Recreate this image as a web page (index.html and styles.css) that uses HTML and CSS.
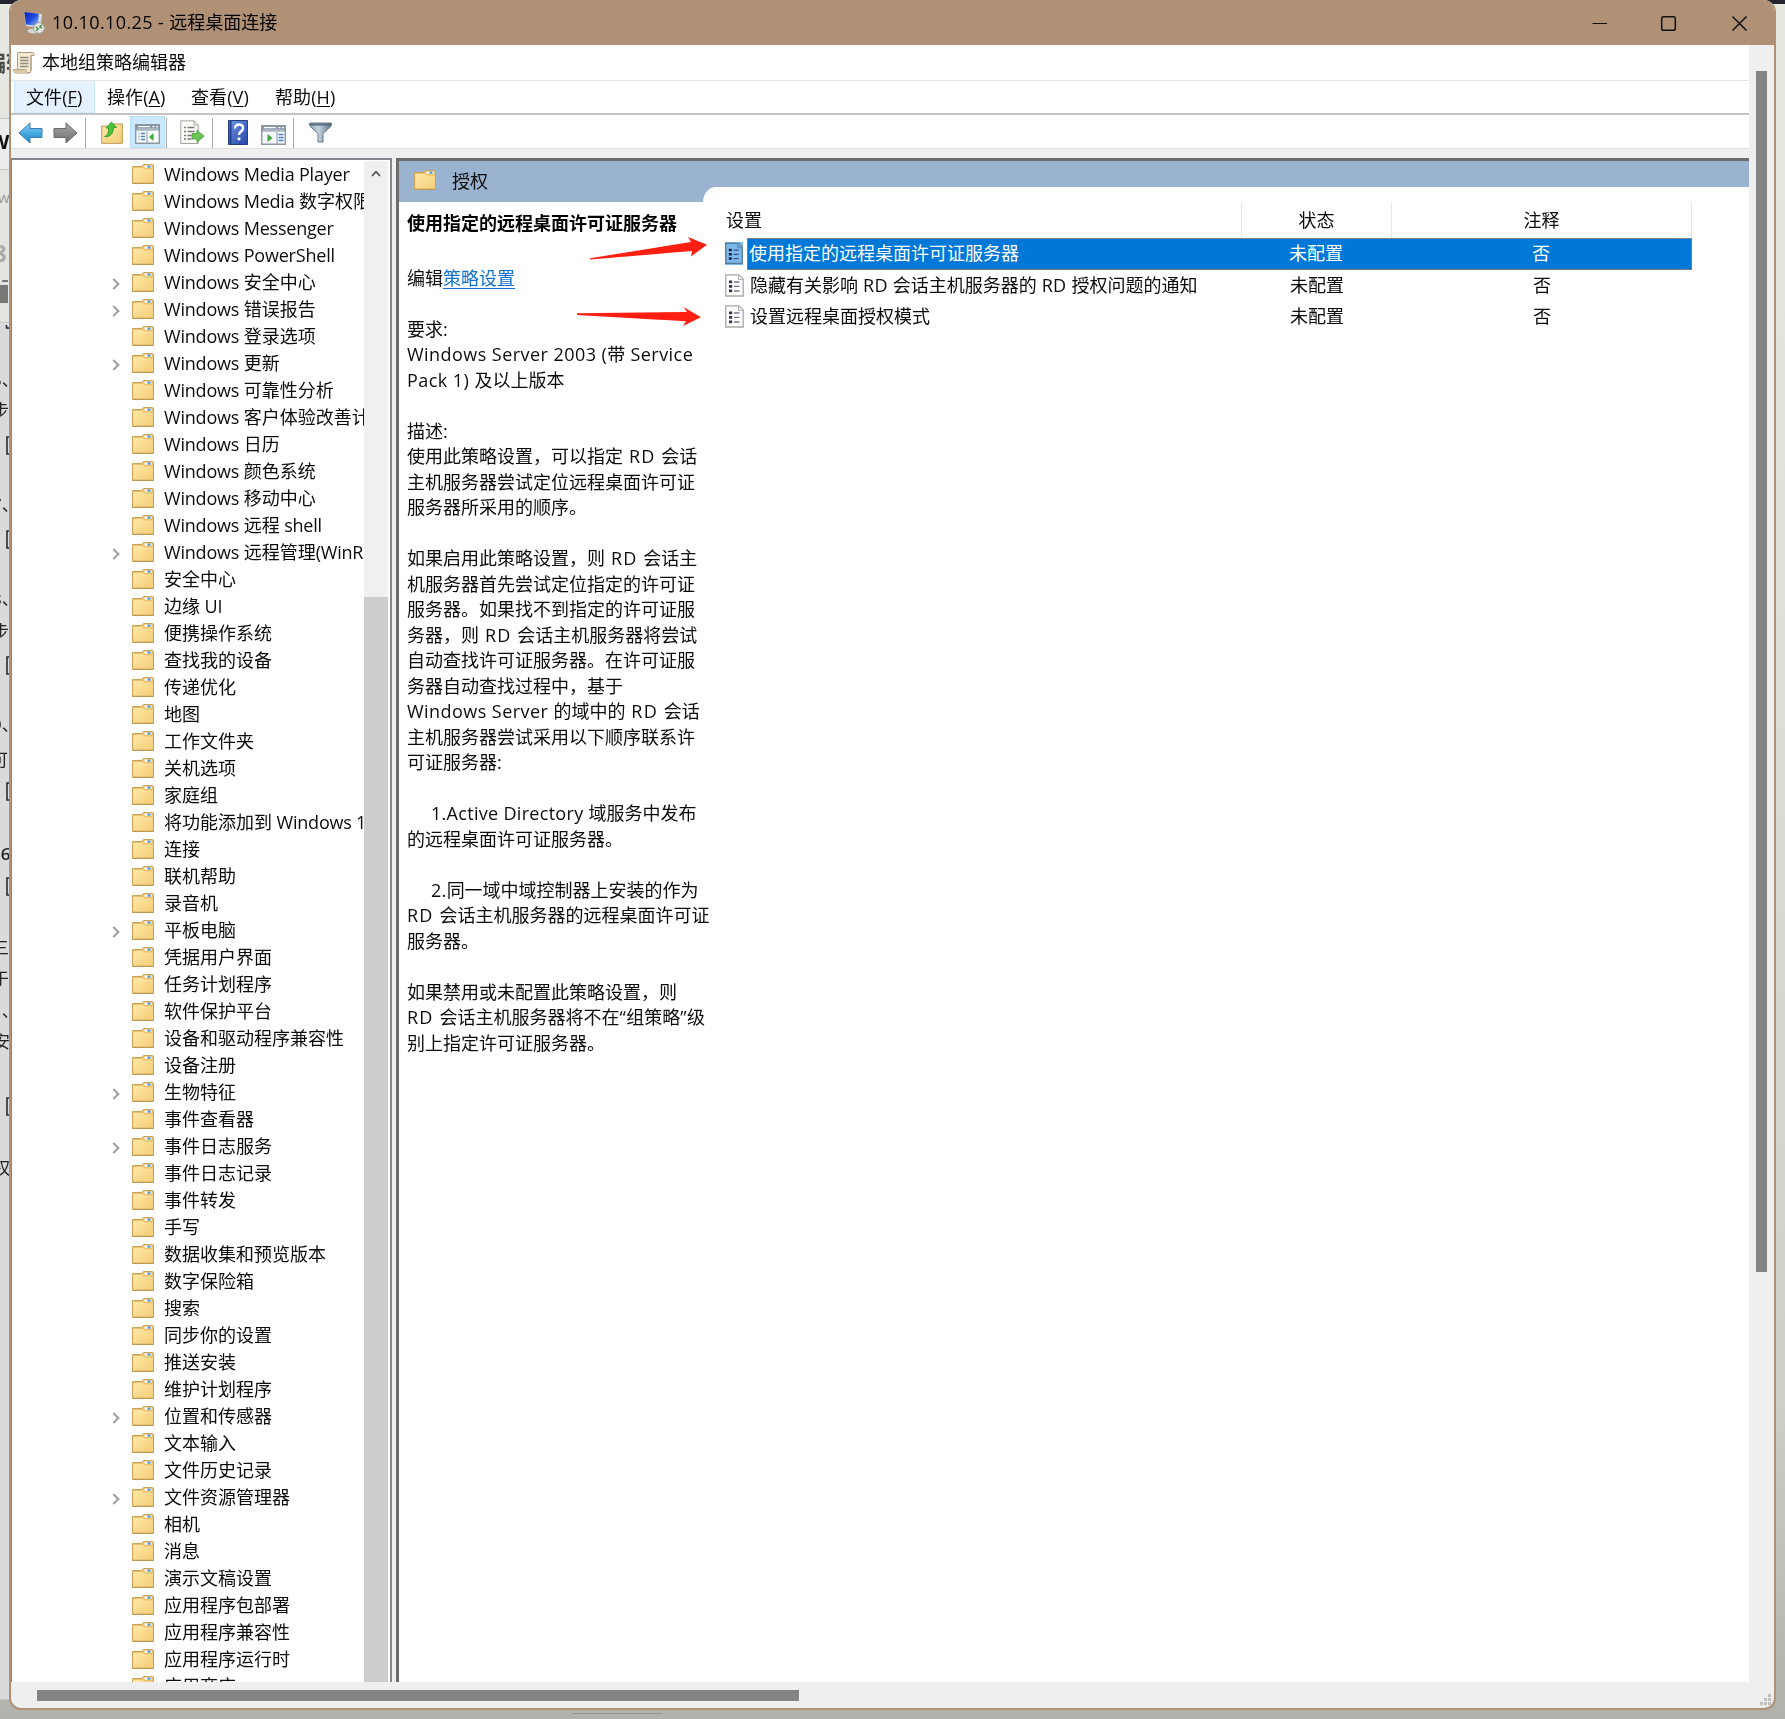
FILE: index.html
```html
<!DOCTYPE html>
<html lang="zh-CN">
<head>
<meta charset="utf-8">
<title>10.10.10.25 - 远程桌面连接</title>
<link rel="stylesheet" href="styles.css">
</head>
<body>
<svg width="0" height="0" class="defs">
  <defs>
    <linearGradient id="gf" x1="0" y1="0" x2="1" y2="1"><stop offset="0" stop-color="#ffe9a6"/><stop offset="1" stop-color="#f3cd78"/></linearGradient>
    <linearGradient id="gb" x1="0" y1="0" x2="0" y2="1"><stop offset="0" stop-color="#7fd0f7"/><stop offset="1" stop-color="#1684cf"/></linearGradient>
    <linearGradient id="gg" x1="0" y1="0" x2="0" y2="1"><stop offset="0" stop-color="#aaa"/><stop offset="1" stop-color="#6e6e6e"/></linearGradient>
    <linearGradient id="gh" x1="0" y1="0" x2="1" y2="1"><stop offset="0" stop-color="#6f93e0"/><stop offset="1" stop-color="#2545a8"/></linearGradient>
    <linearGradient id="gm" x1="0" y1="0" x2="1" y2="1"><stop offset="0" stop-color="#0a1fb0"/><stop offset=".5" stop-color="#1d49e0"/><stop offset="1" stop-color="#9fc3f7"/></linearGradient>
    <linearGradient id="gt" x1="0" y1="0" x2="1" y2="0"><stop offset="0" stop-color="#8da3b5"/><stop offset=".4" stop-color="#c5d5e2"/><stop offset="1" stop-color="#5d7385"/></linearGradient>
    <symbol id="folder" viewBox="0 0 22 20">
      <path d="M.5 2.500h9l2-2h8.500q1.500 0 1.500 1.500v17.500h-21z" fill="#e9c272" stroke="#c9a257"/>
      <rect x="12.500" y="1.500" width="7" height="2.200" fill="#fff"/><rect x="15.500" y="1.500" width="3" height="2.200" fill="#4c95d8"/>
      <path d="M1.200 4h9.300l2 1.500h8.300v13.300H1.200z" fill="url(#gf)"/>
      <path d="M1 19.300h20.500" stroke="#b99752"/>
    </symbol>
    <symbol id="doc" viewBox="0 0 19 23">
      <path class="paper" d="M.8.800H14l4.200 4.200v17H.8z" stroke-width="1.300"/>
      <path class="fold" d="M13.500.800v4.700h4.700"/>
      <path d="M4 6.500h3.200v2.700H4zM4 11h3.200v2.700H4zM4 15.500h3.200v2.700H4z" fill="#33384a"/>
      <path d="M9 8h5.500M9 12.400h5.500M9 17h5.500" stroke="#7b7590" stroke-width="1.300"/>
    </symbol>
    <symbol id="pane" viewBox="0 0 25 20">
      <path d="M.7.700h23.600v18.600H.7z" fill="#f6f8fa" stroke="#8b97a3" stroke-width="1.400"/>
      <path d="M1 1h23v5.500H1z" fill="#8795a4"/><path d="M3 2.700h12M17.500 2.700h2M21 2.700h2" stroke="#fff" stroke-width="1.200"/><path d="M2 5h21" stroke="#c9d2da"/>
    </symbol>
  </defs>
</svg>

<svg class="behind" width="1785" height="1719">
  <rect class="b-top" width="1785" height="4"/>
  <rect class="b-line" y="118" width="9" height="1"/><rect class="b-lite" y="119" width="9" height="50"/><rect class="b-line" y="169" width="9" height="1"/>
  <rect class="b-grey" y="324" width="9" height="1375"/><rect class="b-line" y="322" width="9" height="1"/><rect class="b-line" y="1699" width="9" height="1"/>
  <text class="b-h" x="-17" y="71">编辑</text>
  <text class="b-w" x="-10" y="149">W</text>
  <text class="b-s" x="-2" y="203">w</text>
  <text class="b-n" x="-7" y="262">8</text>
  <rect x="2" y="280" width="6" height="2" fill="#777"/><rect y="285" width="8" height="18" fill="#777"/>
  <path d="M6.500 325v3h3" class="b-box"/>
  <text class="b-t" x="-8" y="386">5、</text><text class="b-t" x="-8" y="417">步</text>
  <path class="b-box" d="M10 437H7v17h3M10 531H7v17h3M10 657H7v17h3M10 783H7v17h3M10 878H7v17h3M10 1098H7v17h3"/>
  <text class="b-t" x="-8" y="511">7、</text><text class="b-t" x="-8" y="605">8、</text><text class="b-t" x="-8" y="638">步</text>
  <text class="b-t" x="-8" y="731">9、</text><text class="b-t" x="-9" y="766">可</text><text class="b-t b-m" x="-9" y="860">16</text>
  <text class="b-t" x="-8" y="954">三</text><text class="b-t" x="-8" y="985">于</text><text class="b-t" x="-8" y="1017">1、</text><text class="b-t" x="-7" y="1048">安</text><text class="b-t" x="-7" y="1174">权</text>
  <rect x="572" y="1713" width="90" height="1" fill="#949492"/>
</svg>

<div class="window">
  <header class="titlebar">
    <svg class="rdp" width="22" height="24" viewBox="0 0 22 24"><ellipse cx="11" cy="20" rx="6.500" ry="2.500" fill="#d4d6da"/><path d="M1 1l18 2-1.500 14L3 15z" fill="#d9dde6"/><path d="M1.300 1l14.500 1.700-.8 12.300L3 13.500z" fill="url(#gm)"/><circle cx="16" cy="17" r="5.400" fill="#e4e6e2" stroke="#9aa09a"/><path d="M12.800 16l2.500 1.800-2 2M19.200 13.700l-2.500 2 2.300 1.600" fill="none" stroke="#3d8b3d" stroke-width="1.300"/></svg>
    <span class="caption"><span class="en">10.10.10.25 - </span>远程桌面连接</span>
    <svg class="winbtns" width="160" height="20" viewBox="0 0 160 20"><path d="M.5 10.500H15" stroke="#111" stroke-width="1.100"/><rect x="69.700" y="3.700" width="13.600" height="13.600" rx="1.800"/><path d="M140.500 3.500l14 14M154.500 3.500l-14 14"/></svg>
  </header>
  <div class="client">
    <div class="remote">
      <div class="apptitle">
        <svg width="22" height="23" viewBox="0 0 22 23"><path d="M5 1.500h14q2.500 0 2 3h-3v15q0 2.500-3 2.500H3q-2.500 0-2.500-3.500h4V4z" fill="#f3ead0" stroke="#a99c80"/><path d="M18 4.500v15q-.5 2.500-3 2.500-2 0-2-3.500H.7" fill="none" stroke="#a99c80"/><path d="M1 18.700h12q.2 2.300 1 3H3q-2 0-2-3z" fill="#dccba2"/><path d="M7 6.500h8.500M7 9.500h8.500M7 12.500h8.500M7 15.500h8.500" stroke="#938c80" stroke-width="1.300"/></svg>
        <span>本地组策略编辑器</span>
      </div>
      <nav class="menu">
        <a class="on">文件(<u>F</u>)</a><a>操作(<u>A</u>)</a><a>查看(<u>V</u>)</a><a>帮助(<u>H</u>)</a>
      </nav>
      <div class="toolbar">
        <svg class="t-back" width="25" height="22" viewBox="0 0 25 22"><path d="M1 11L12 1v5.500h12v9H12V21z" fill="url(#gb)" stroke="#3a7fae"/></svg>
        <svg class="t-fwd" width="25" height="22" viewBox="0 0 25 22"><path d="M24 11L13 1v5.500H1v9h12V21z" fill="url(#gg)" stroke="#6b6b6b"/></svg>
        <i class="sep"></i>
        <svg class="t-up" width="22" height="23" viewBox="0 0 22 23"><path d="M.7 5H9l2-2h10.300v19.300H.7z" fill="url(#gf)" stroke="#b99752"/><path d="M3.500 15.500c3.500-1 4-4 4-8.500H5L10.500 1l5 5.500h-3c0 6-3.500 10-9 9z" fill="#49c23a" stroke="#2f8f28" stroke-width=".8"/></svg>
        <span class="t-on"><svg width="25" height="20"><use href="#pane"/><path d="M2 8h9v10H2z" fill="#fff"/><path d="M3.500 9.500h1M3.500 12.500h1M3.500 15.500h1M6 9.500h4M6 12.500h4M6 15.500h4" stroke="#4a7fc0" stroke-width="1.300"/><path d="M12 7v12" stroke="#8b97a3"/><path d="M18.500 9v8l-4.500-4z" fill="#3aa935"/></svg></span>
        <i class="sep s2"></i>
        <svg class="t-exp" width="25" height="25" viewBox="0 0 25 25"><path d="M.8.800H14l4.200 4.200v18.500H.8z" fill="#fbfbf8" stroke="#a5a5a0"/><path d="M14 .8V5h4.200" fill="none" stroke="#a5a5a0"/><path d="M4 7.500h2M4 11.500h2M4 15.500h2M4 19h2M7.500 7.500h7M7.500 11.500h7M7.500 15.500h4M7.500 19h4" stroke="#777" stroke-width="1.400"/><path d="M12 13.500h5V10l7 6.200-7 6.200V19h-5z" fill="#6cc455" stroke="#45a035" stroke-width=".8"/></svg>
        <i class="sep s3"></i>
        <svg class="t-help" width="20" height="25" viewBox="0 0 20 25"><path d="M.5.500h19v24H.5z" fill="url(#gh)" stroke="#24407f"/><path d="M2.500 1v23" stroke="#23408f" stroke-width="2"/><path d="M7 8.500q0-4 4-4t4 3.600q0 2.300-2.200 3.500-1.800 1-1.800 3.400" fill="none" stroke="#fff" stroke-width="2.400"/><circle cx="11" cy="18.800" r="1.600" fill="#fff"/></svg>
        <svg class="t-act" width="25" height="20"><use href="#pane"/><path d="M16 7v12" stroke="#8b97a3"/><path d="M17.500 9.500h5M17.500 12.500h5M17.500 15.500h5" stroke="#4a7fc0" stroke-width="1.300"/><path d="M6.500 9v8l5-4z" fill="#3aa935"/></svg>
        <i class="sep s4"></i>
        <svg class="t-filter" width="23" height="21" viewBox="0 0 23 21"><path d="M.7 1h21.600v3L14 11.500V20H9v-8.500L.7 4z" fill="url(#gt)" stroke="#647a8c"/><path d="M1 2.500h21" stroke="#566d80" stroke-width="2"/></svg>
      </div>
      <main class="panes">
        <section class="tree">
          <ul>
            <li><svg><use href="#folder"/></svg><span class="en">Windows Media Player</span></li>
            <li><svg><use href="#folder"/></svg><span class="en">Windows Media </span>数字权限管理</li>
            <li><svg><use href="#folder"/></svg><span class="en">Windows Messenger</span></li>
            <li><svg><use href="#folder"/></svg><span class="en">Windows PowerShell</span></li>
            <li class="more"><svg><use href="#folder"/></svg><span class="en">Windows </span>安全中心</li>
            <li class="more"><svg><use href="#folder"/></svg><span class="en">Windows </span>错误报告</li>
            <li><svg><use href="#folder"/></svg><span class="en">Windows </span>登录选项</li>
            <li class="more"><svg><use href="#folder"/></svg><span class="en">Windows </span>更新</li>
            <li><svg><use href="#folder"/></svg><span class="en">Windows </span>可靠性分析</li>
            <li><svg><use href="#folder"/></svg><span class="en">Windows </span>客户体验改善计划</li>
            <li><svg><use href="#folder"/></svg><span class="en">Windows </span>日历</li>
            <li><svg><use href="#folder"/></svg><span class="en">Windows </span>颜色系统</li>
            <li><svg><use href="#folder"/></svg><span class="en">Windows </span>移动中心</li>
            <li><svg><use href="#folder"/></svg><span class="en">Windows </span>远程<span class="en"> shell</span></li>
            <li class="more"><svg><use href="#folder"/></svg><span class="en">Windows </span>远程管理<span class="en">(WinRM)</span></li>
            <li><svg><use href="#folder"/></svg>安全中心</li>
            <li><svg><use href="#folder"/></svg>边缘<span class="en"> UI</span></li>
            <li><svg><use href="#folder"/></svg>便携操作系统</li>
            <li><svg><use href="#folder"/></svg>查找我的设备</li>
            <li><svg><use href="#folder"/></svg>传递优化</li>
            <li><svg><use href="#folder"/></svg>地图</li>
            <li><svg><use href="#folder"/></svg>工作文件夹</li>
            <li><svg><use href="#folder"/></svg>关机选项</li>
            <li><svg><use href="#folder"/></svg>家庭组</li>
            <li><svg><use href="#folder"/></svg>将功能添加到<span class="en"> Windows 10</span></li>
            <li><svg><use href="#folder"/></svg>连接</li>
            <li><svg><use href="#folder"/></svg>联机帮助</li>
            <li><svg><use href="#folder"/></svg>录音机</li>
            <li class="more"><svg><use href="#folder"/></svg>平板电脑</li>
            <li><svg><use href="#folder"/></svg>凭据用户界面</li>
            <li><svg><use href="#folder"/></svg>任务计划程序</li>
            <li><svg><use href="#folder"/></svg>软件保护平台</li>
            <li><svg><use href="#folder"/></svg>设备和驱动程序兼容性</li>
            <li><svg><use href="#folder"/></svg>设备注册</li>
            <li class="more"><svg><use href="#folder"/></svg>生物特征</li>
            <li><svg><use href="#folder"/></svg>事件查看器</li>
            <li class="more"><svg><use href="#folder"/></svg>事件日志服务</li>
            <li><svg><use href="#folder"/></svg>事件日志记录</li>
            <li><svg><use href="#folder"/></svg>事件转发</li>
            <li><svg><use href="#folder"/></svg>手写</li>
            <li><svg><use href="#folder"/></svg>数据收集和预览版本</li>
            <li><svg><use href="#folder"/></svg>数字保险箱</li>
            <li><svg><use href="#folder"/></svg>搜索</li>
            <li><svg><use href="#folder"/></svg>同步你的设置</li>
            <li><svg><use href="#folder"/></svg>推送安装</li>
            <li><svg><use href="#folder"/></svg>维护计划程序</li>
            <li class="more"><svg><use href="#folder"/></svg>位置和传感器</li>
            <li><svg><use href="#folder"/></svg>文本输入</li>
            <li><svg><use href="#folder"/></svg>文件历史记录</li>
            <li class="more"><svg><use href="#folder"/></svg>文件资源管理器</li>
            <li><svg><use href="#folder"/></svg>相机</li>
            <li><svg><use href="#folder"/></svg>消息</li>
            <li><svg><use href="#folder"/></svg>演示文稿设置</li>
            <li><svg><use href="#folder"/></svg>应用程序包部署</li>
            <li><svg><use href="#folder"/></svg>应用程序兼容性</li>
            <li><svg><use href="#folder"/></svg>应用程序运行时</li>
            <li><svg><use href="#folder"/></svg>应用商店</li>
          </ul>
          <div class="treebar"><svg width="10" height="7" viewBox="0 0 10 7"><path d="M1 6l4-4.300L9 6" fill="none" stroke="#555" stroke-width="1.800"/></svg><i></i></div>
        </section>
        <section class="detail">
          <div class="info">
            <div class="band"><svg width="22" height="20"><use href="#folder"/></svg><span>授权</span></div>
            <h1>使用指定的远程桌面许可证服务器</h1>
            <div class="desc">编辑<a>策略设置</a>

要求:
<span class="en">Windows Server 2003 (</span>带<span class="en"> Service</span>
<span class="en">Pack 1) </span>及以上版本

描述:
使用此策略设置，可以指定<span class="rd"> RD </span>会话
主机服务器尝试定位远程桌面许可证
服务器所采用的顺序。

如果启用此策略设置，则<span class="rd"> RD </span>会话主
机服务器首先尝试定位指定的许可证
服务器。如果找不到指定的许可证服
务器，则<span class="rd"> RD </span>会话主机服务器将尝试
自动查找许可证服务器。在许可证服
务器自动查找过程中，基于
<span class="en">Windows Server </span>的域中的<span class="rd"> RD </span>会话
主机服务器尝试采用以下顺序联系许
可证服务器:

<span class="en ind">1.Active Directory </span>域服务中发布
的远程桌面许可证服务器。

<span class="en ind">2.</span>同一域中域控制器上安装的作为
<span class="rd">RD </span>会话主机服务器的远程桌面许可证
服务器。

如果禁用或未配置此策略设置，则
<span class="rd">RD </span>会话主机服务器将不在<span class="en">“</span>组策略<span class="en">”</span>级
别上指定许可证服务器。</div>
          </div>
          <div class="listwrap">
            <div class="list">
              <div class="row head"><span>设置</span><span>状态</span><span>注释</span></div>
              <div class="row sel"><svg><use href="#doc"/></svg><div class="cells"><span>使用指定的远程桌面许可证服务器</span><span>未配置</span><span>否</span></div></div>
              <div class="row"><svg><use href="#doc"/></svg><div class="cells"><span>隐藏有关影响<span class="en"> RD </span>会话主机服务器的<span class="en"> RD </span>授权问题的通知</span><span>未配置</span><span>否</span></div></div>
              <div class="row"><svg><use href="#doc"/></svg><div class="cells"><span>设置远程桌面授权模式</span><span>未配置</span><span>否</span></div></div>
            </div>
          </div>
        </section>
      </main>
    </div>
    <div class="vbar"><i></i></div>
    <div class="hbar"><i></i></div>
  </div>
  <svg class="grip" width="12" height="12"><path d="M8 0h3v3H8zM4 4h3v3H4zM8 4h3v3H8zM0 8h3v3H0zM4 8h3v3H4zM8 8h3v3H8z" fill="#bfbfbf"/></svg>
</div>

<svg class="arrows" width="140" height="95" viewBox="575 235 140 95">
  <path d="M590 259.500v-1.200L691 242l-3-5 19 7.700-16 11.800 1-5.500z" fill="#ff1f12"/>
  <path d="M577 313.200L687 312l-3.500-5 17.500 10.300-18 8.700 3-4.700L577 315z" fill="#ff1f12"/>
</svg>
</body>
</html>
```
FILE: styles.css
```css
* { box-sizing: border-box; }
html, body { margin: 0; height: 100%; overflow: hidden; }
body {
  width: 1785px; height: 1719px; padding: 0 9px 9px;
  background: linear-gradient(#e8e8e2 0, #e0e0da 600px, #cfcfca 1400px, #b2b2ad 1719px);
  font: 18px/27px "Open Sans", "Noto Sans CJK SC", sans-serif;
  color: #0c0c0c;
}
.defs { position: absolute; }
.en, .rd { white-space: pre; letter-spacing: -.2px; }

/* page partly visible behind the window */
.behind { position: absolute; left: 0; top: 0; font-family: "Open Sans", "Noto Sans CJK SC", sans-serif; }
.b-top { fill: #23252e; }
.b-line { fill: #c4c4c0; }
.b-lite { fill: #ececec; }
.b-grey { fill: #dadada; }
.b-h { font-size: 23px; font-weight: 700; fill: #4a4a48; }
.b-w { font-size: 20px; font-weight: 700; fill: #111; }
.b-s { font-size: 15px; fill: #999; }
.b-n { font-size: 24px; font-weight: 700; fill: #aaa; }
.b-t { font-size: 17px; fill: #222; }
.b-m { font-weight: 600; }
.b-box { fill: none; stroke: #222; stroke-width: 1.500; }

.window {
  position: relative; width: 1767px; height: 1710px;
  display: flex; flex-direction: column; overflow: hidden;
  border: 2px solid #b09175; border-top: 0; border-radius: 12px; background: #efefef;
}
.titlebar { flex: none; height: 45px; display: flex; align-items: center; background: #b09175; color: #000; }
.rdp { margin-left: 12px; }
.caption { margin-left: 7px; flex: 1; }
.caption .en { letter-spacing: .4px; }
.winbtns { margin-right: 22px; fill: none; stroke: #111; stroke-width: 1.500; }
.grip { position: absolute; right: 2px; bottom: 2px; }

.client { flex: 1; display: grid; grid-template: 1637px 26px / 1738px 25px; }
.remote { display: flex; flex-direction: column; min-width: 0; background: #fff; overflow: hidden; }
.vbar { padding: 26px 0 0 7px; }
.vbar i { display: block; width: 11px; height: 1201px; background: #848484; }
.hbar { grid-column: 1 / 3; padding: 8px 0 0 26px; }
.hbar i { display: block; width: 762px; height: 11px; background: #848484; }

.apptitle { flex: none; height: 35px; display: flex; align-items: center; gap: 7px; padding-left: 2px; }
.menu { flex: none; height: 35px; display: flex; border-top: 1px solid #e5e5e5; border-bottom: 2px solid #c4c4c4; padding-left: 3px; }
.menu a { width: 84px; padding-left: 12px; line-height: 33px; white-space: nowrap; letter-spacing: .1px; }
.menu a.on { width: 81px; height: 32px; padding-left: 11px; background: #e5f1ff; border: 1px solid #cce8ff; border-top: 0; }
.menu a u { text-underline-offset: 2px; text-decoration-thickness: 1px; }
.toolbar { flex: none; height: 34px; display: flex; align-items: center; border-bottom: 1px solid #e0e0e0; padding: 2px 0 0 7px; }
.toolbar svg { flex: none; }
.sep { width: 1px; height: 30px; margin-left: 7px; background: #a9a9a9; }
.t-fwd { margin-left: 10px; }
.t-up { margin-left: 15px; }
.t-on { margin-left: 7px; width: 35px; height: 32px; margin-top: -2px; background: #cce8ff; border: 1px solid #b4dcfb; display: flex; align-items: center; justify-content: center; padding-top: 5px; }
.s2 { margin-left: 1px; }
.t-exp { margin-left: 13px; }
.s3 { margin-left: 7px; }
.t-help { margin-left: 15px; }
.t-act { margin: 4px 0 0 13px; }
.s4 { margin-left: 7px; }
.t-filter { margin-left: 15px; }

.panes { flex: 1; min-height: 0; display: flex; gap: 4px; padding-top: 9px; background: #efefef; }
.tree { width: 381px; display: flex; background: #fff; border: 2px solid #83868c; border-width: 2px 2px 0 1px; padding-top: 1px; overflow: hidden; }
.tree ul { list-style: none; margin: 0; padding: 0 0 0 101px; width: 352px; overflow: hidden; }
.tree li { display: flex; align-items: center; height: 27px; white-space: pre; padding: .6px 0 0 19px; }
.tree li > * { flex: none; }
.tree li svg { width: 22px; height: 20px; margin: 0 10px 1px 0; }
.tree li.more { padding-left: 0; }
.tree li.more::before { content: ""; flex: none; width: 8px; height: 8px; box-sizing: border-box; margin: 3px 14px 0 -3px; border: solid #a0a0a0; border-width: 2px 2px 0 0; transform: rotate(45deg); }
.treebar { width: 24px; display: flex; flex-direction: column; align-items: center; background: #f0f0f0; padding-top: 9px; }
.treebar i { width: 24px; flex: 1; margin-top: 420px; background: #cdcdcd; }

.detail { flex: 1; display: flex; border: solid #6c6c6c; border-width: 3px 0 0 3px; background: #fff; }
.info { position: relative; z-index: 1; width: 304px; white-space: nowrap; }
.band { height: 41px; background: #9ab3d0; display: flex; align-items: center; padding-left: 15px; gap: 16px; }
.band svg { margin-bottom: 3px; }
.info h1 { margin: 8px 0 0 8px; font-size: 18px; line-height: 27px; font-weight: 700; color: #000; }
.desc { margin: 28.500px 0 0 8px; white-space: pre; line-height: 25.520px; }
.desc a { color: #1272d4; text-decoration: underline; text-underline-offset: 3px; text-decoration-thickness: 1px; }
.desc .en { letter-spacing: .45px; }
.desc .rd { letter-spacing: 1.2px; }
.desc .ind { padding-left: 24px; letter-spacing: .3px; }
.listwrap { flex: 1; padding-top: 26px; background: linear-gradient(#9ab3d0 41px, #fff 41px); }
.list { height: 100%; padding: 15px 0 0 21px; background: #fff; border-top-left-radius: 13px 15px; }
.row { display: flex; align-items: center; width: 968px; height: 31.500px; }
.row svg { width: 19px; height: 23px; margin: 0 4px 0 1px; }
#doc .paper { fill: #fff; stroke: #a8a8a8; }
#doc .fold { fill: #ececec; stroke: #b0b0b0; }
.sel svg { background: #7db9ec; }
.sel svg use { mix-blend-mode: multiply; }
.cells { flex: 1; height: 100%; display: grid; grid-template-columns: 494px 150px 300px; align-items: center; }
.cells > span + span { text-align: center; }
.cells > span:first-child { padding-left: 2px; }
.row .en { letter-spacing: .3px; }
.sel .cells { background: #0078d7; color: #fff; border: 1px solid #7c7f82; grid-template-columns: 493px 150px 300px; }
.sel .cells > span:first-child { padding-left: 1px; }
.head { display: grid; grid-template-columns: 518px 150px 300px; height: 36px; }
.head span { height: 36px; line-height: 36px; border-right: 1px solid #e8e8e8; text-align: center; }
.head span:first-child { text-align: left; padding-left: 2px; }
.arrows { position: absolute; left: 575px; top: 235px; z-index: 2; }
```
